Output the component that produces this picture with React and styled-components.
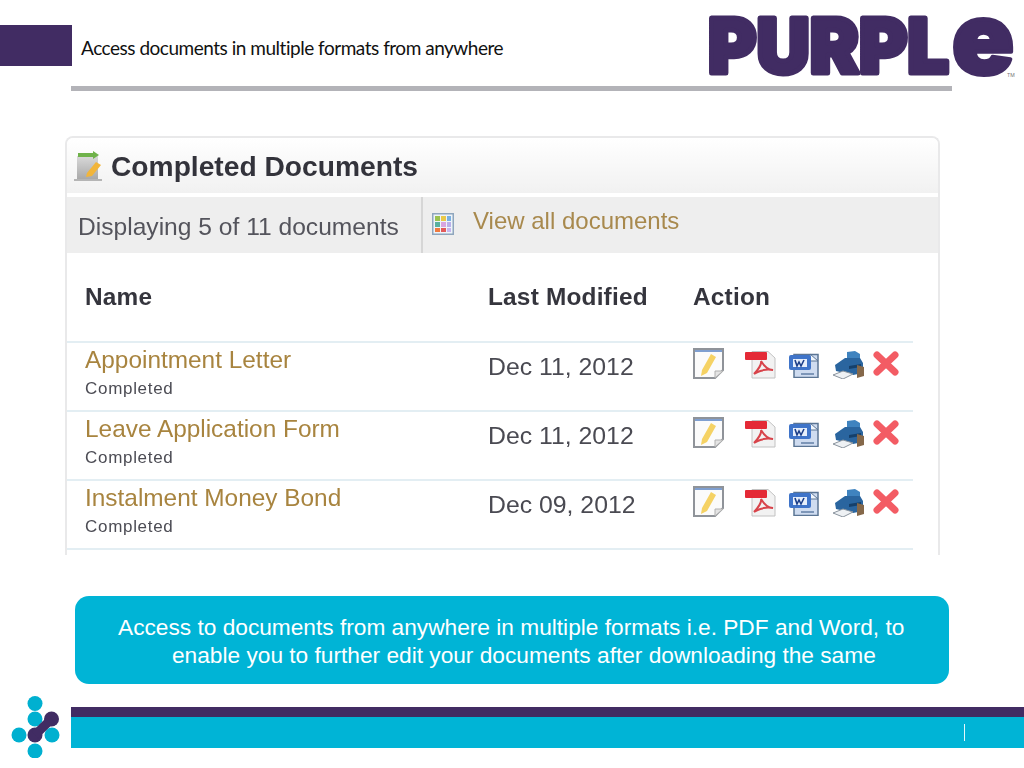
import React from 'react';
import styled, { createGlobalStyle } from 'styled-components';

const GlobalStyle = createGlobalStyle`
  html, body {
    margin: 0;
    padding: 0;
    background: #fff;
  }
`;

const Page = styled.div`
  width: 1024px;
  height: 768px;
  overflow: hidden;
  background: #fff;
  font-family: "Liberation Sans", Arial, sans-serif;
`;

const Header = styled.header`
  display: flex;
  align-items: flex-start;
  height: 86px;
`;

const TitleBlock = styled.div`
  width: 72px;
  height: 41px;
  margin-top: 25px;
  background: #412c63;
`;

const SlideTitle = styled.h1`
  margin: 36px 0 0 9px;
  font-family: Lato, sans-serif;
  font-weight: 400;
  font-size: 19px;
  line-height: 24px;
  letter-spacing: -0.48px;
  color: #111;
`;

const LogoWrap = styled.svg`
  display: block;
  flex: 0 0 318px;
  margin-left: auto;
  overflow: visible;
`;

const Rule = styled.div`
  width: 881px;
  height: 5px;
  margin-left: 71px;
  background: #b3b3b8;
`;

const Panel = styled.section`
  box-sizing: border-box;
  width: 875px;
  height: 419px;
  margin: 45px 0 0 65px;
  overflow: hidden;
  border: 2px solid #e9e9ea;
  border-bottom: none;
  border-radius: 8px 8px 0 0;
  filter: blur(0.45px);
`;

const PanelHead = styled.div`
  display: flex;
  align-items: center;
  gap: 7px;
  box-sizing: border-box;
  height: 59px;
  padding: 1px 0 0 7px;
  background: linear-gradient(#ffffff, #f1f1f1);
  background-size: 100% 55px;
  background-repeat: no-repeat;
  border-bottom: 4px solid #fff;
`;

const PanelTitle = styled.h2`
  margin: 0;
  font-size: 28.2px;
  font-weight: 700;
  color: #33333b;
`;

const Toolbar = styled.div`
  display: flex;
  height: 56px;
  background: #eeeeee;
`;

const Count = styled.div`
  box-sizing: border-box;
  width: 356px;
  padding: 16px 0 0 11px;
  border-right: 2px solid #d6d6d6;
  font-size: 24.6px;
  color: #54545c;
`;

const ViewAll = styled.div`
  display: flex;
  align-items: flex-start;
  gap: 19px;
  padding: 10px 0 0 9px;
  font-size: 24px;
  color: #a8894d;
`;

const Table = styled.div`
  width: 846px;
`;

const Row = styled.div`
  display: grid;
  grid-template-columns: 403px 205px 1fr;
  box-sizing: border-box;
  height: ${p => (p.$head ? '90px' : '69px')};
  padding-left: 18px;
  border-bottom: 2px solid #e3eef3;
`;

const HeadCell = styled.div`
  padding-top: 30px;
  font-size: 24.4px;
  font-weight: 700;
  letter-spacing: 0.2px;
  color: #35353d;
`;

const NameCell = styled.div`
  padding-top: 3px;
`;

const DocName = styled.div`
  font-size: 24.4px;
  line-height: 28px;
  color: #a8843f;
`;

const DocStatus = styled.div`
  margin-top: 5px;
  font-size: 17px;
  line-height: 20px;
  letter-spacing: 0.7px;
  color: #4c4c54;
`;

const DateCell = styled.div`
  padding-top: 9px;
  font-size: 24.8px;
  line-height: 30px;
  color: #4a4a52;
`;

const Actions = styled.div`
  display: flex;
  align-items: flex-start;
  padding-top: 5px;
  filter: blur(0.3px);
`;

const Icon = styled.svg`
  display: block;
  flex: none;
  margin: ${p => p.$mt || 0}px ${p => p.$mr || 0}px 0 0;
`;

const Callout = styled.div`
  box-sizing: border-box;
  width: 874px;
  height: 88px;
  margin: 41px 0 0 75px;
  padding: 17px 0 0 97px;
  border-radius: 14px;
  background: #00b4d6;
  color: #fff;
  font-size: 22.7px;
  line-height: 28px;
  text-indent: -54px;
  white-space: nowrap;
`;

const Footer = styled.footer`
  display: flex;
  align-items: center;
  height: 62px;
  margin-top: 12px;
`;

const MarkSlot = styled.div`
  flex: 0 0 71px;
`;

const Bars = styled.div`
  flex: 1;
  display: flex;
  flex-direction: column;
`;

const PurpleBar = styled.div`
  height: 10px;
  background: #412c63;
`;

const CyanBar = styled.div`
  display: flex;
  align-items: center;
  height: 31px;
  padding-left: 893px;
  background: #00b4d6;
`;

const Tick = styled.span`
  width: 1px;
  height: 17px;
  background: #e4f7fb;
`;

const PurpleLogo = () => (
  <LogoWrap width="318" height="86" viewBox="0 0 318 86">
    <g fontFamily="Inter, sans-serif" fontWeight="900" fill="#412c63" stroke="#412c63" strokeLinejoin="round">
      <text x="2" y="73" fontSize="76" strokeWidth="5" textLength="241" lengthAdjust="spacingAndGlyphs">
        PURPL
      </text>
      <text x="246" y="73.5" fontSize="100" strokeWidth="4" textLength="62" lengthAdjust="spacingAndGlyphs">
        e
      </text>
    </g>
    <text x="301" y="77" fontFamily="Inter, sans-serif" fontSize="5" fill="#777">TM</text>
  </LogoWrap>
);

const Mark = () => (
  <Icon width="71" height="62" viewBox="0 0 71 62">
    <g fill="#00b0d0">
      <circle cx="35" cy="7.5" r="7.5" />
      <circle cx="35" cy="23" r="7.5" />
      <circle cx="19" cy="39" r="7.5" />
      <circle cx="52" cy="39" r="7.5" />
      <circle cx="35" cy="55" r="7.5" />
    </g>
    <g fill="#412c63">
      <circle cx="51.5" cy="23" r="7.5" />
      <circle cx="35" cy="39" r="7.5" />
      <path d="M35 39 L51.5 23" stroke="#412c63" strokeWidth="9" />
    </g>
  </Icon>
);

const NotesIcon = () => (
  <Icon width="30" height="30" viewBox="0 0 30 30">
    <defs>
      <linearGradient id="noteBody" x1="0" y1="0" x2="0" y2="1">
        <stop offset="0" stopColor="#d9d9d9" />
        <stop offset="1" stopColor="#a9a9a9" />
      </linearGradient>
    </defs>
    <rect x="3" y="5" width="21" height="23" fill="url(#noteBody)" />
    <path d="M4 2 H19 V0 L25 4 L19 8 V6 H4 Z" fill="#6fb24a" />
    <path d="M13 22 L22 11 L27 14 L18 25 L12 26 Z" fill="#f2b53a" />
    <path d="M0 28 H28 V30 H0 Z" fill="#b5b5b5" />
  </Icon>
);

const GridIcon = () => (
  <Icon width="22" height="22" viewBox="0 0 22 22" $mt={6}>
    <rect x="0.75" y="0.75" width="20.5" height="20.5" fill="#eef4fa" stroke="#8fa6bd" strokeWidth="1.5" />
    <rect x="3" y="3" width="5" height="5" fill="#9bc24f" />
    <rect x="9" y="3" width="5" height="5" fill="#e9c94a" />
    <rect x="15" y="3" width="4" height="5" fill="#7ab0e0" />
    <rect x="3" y="9" width="5" height="5" fill="#59b0a0" />
    <rect x="9" y="9" width="5" height="5" fill="#d8a5e0" />
    <rect x="15" y="9" width="4" height="5" fill="#b9b0ea" />
    <rect x="3" y="15" width="5" height="4" fill="#ef7a3f" />
    <rect x="9" y="15" width="5" height="4" fill="#e35a5a" />
    <rect x="15" y="15" width="4" height="4" fill="#c6b5ee" />
  </Icon>
);

const EditIcon = () => (
  <Icon width="32" height="32" viewBox="0 0 32 32" $mr={20}>
    <path d="M1 1 H30 V22 L22 30 H1 Z" fill="#fbfbfb" stroke="#8f9399" strokeWidth="2" />
    <path d="M2 2 H29 V4 H2 Z" fill="#7f9fd0" />
    <path d="M9 22 L18 6 L23 9 L14 25 L8 28 Z" fill="#f5d264" />
    <path d="M22 30 V23 H30 Z" fill="#e4e4e4" stroke="#b0b0b0" />
  </Icon>
);

const PdfIcon = () => (
  <Icon width="31" height="31" viewBox="0 0 31 31" $mr={13} $mt={3}>
    <path d="M7 0.5 H23 L30 7 V27 H7 Z" fill="#f2f2f2" stroke="#c2c2c2" />
    <rect x="0" y="1" width="22" height="8" rx="1" fill="#e42a36" />
    <path
      d="M9 23 C13 19 17 13 16 10 C19 15 23 19 28 19 C22 18 15 19 9 23 Z"
      fill="none"
      stroke="#d8434a"
      strokeWidth="2"
    />
  </Icon>
);

const WordIcon = () => (
  <Icon width="30" height="25" viewBox="0 0 30 25" $mr={14} $mt={5}>
    <rect x="5" y="1.5" width="24" height="23" fill="#cfdcf0" stroke="#5b7594" strokeWidth="1.5" />
    <path d="M21 1 L29 8 H21 Z" fill="#f0f5fb" stroke="#5b7594" />
    <rect x="0" y="2" width="22" height="15" rx="2" fill="#3f74c9" />
    <rect x="4" y="6" width="14" height="8" fill="#e7effb" />
    <path d="M6 7 L8 13 L10 9 L12 13 L15 7" fill="none" stroke="#1c3f8a" strokeWidth="1.6" />
    <rect x="12" y="20" width="13" height="2" fill="#7d96b8" />
  </Icon>
);

const PrinterIcon = () => (
  <Icon width="31" height="28" viewBox="0 0 31 28" $mr={9} $mt={3}>
    <path d="M14 1 L22 0 L27 3 V11 H14 Z" fill="#3f83bf" />
    <path d="M2 14 L12 7 H27 L30 12 V22 L20 24 L3 20 Z" fill="#2a659f" />
    <path d="M16 15 L28 13 V16 L16 18 Z" fill="#16406b" />
    <path d="M24 14 L31 16 V25 L24 27 Z" fill="#85684a" />
    <path d="M0 24 L10 20 L20 23 L10 28 Z" fill="#eef1f4" stroke="#8a949e" />
  </Icon>
);

const DeleteIcon = () => (
  <Icon width="26" height="25" viewBox="0 0 26 25" $mt={3}>
    <path d="M4 4 L22 21 M22 4 L4 21" stroke="#f35c64" strokeWidth="7" strokeLinecap="round" />
  </Icon>
);

const docs = [
  { name: 'Appointment Letter', date: 'Dec 11, 2012' },
  { name: 'Leave Application Form', date: 'Dec 11, 2012' },
  { name: 'Instalment Money Bond', date: 'Dec 09, 2012' },
];

const App = () => (
  <Page>
    <GlobalStyle />
    <Header>
      <TitleBlock />
      <SlideTitle>Access documents in multiple formats from anywhere</SlideTitle>
      <PurpleLogo />
    </Header>
    <Rule />
    <Panel>
      <PanelHead>
        <NotesIcon />
        <PanelTitle>Completed Documents</PanelTitle>
      </PanelHead>
      <Toolbar>
        <Count>Displaying 5 of 11 documents</Count>
        <ViewAll>
          <GridIcon />
          View all documents
        </ViewAll>
      </Toolbar>
      <Table>
        <Row $head>
          <HeadCell>Name</HeadCell>
          <HeadCell>Last Modified</HeadCell>
          <HeadCell>Action</HeadCell>
        </Row>
        {docs.map(doc => (
          <Row key={doc.name}>
            <NameCell>
              <DocName>{doc.name}</DocName>
              <DocStatus>Completed</DocStatus>
            </NameCell>
            <DateCell>{doc.date}</DateCell>
            <Actions>
              <EditIcon />
              <PdfIcon />
              <WordIcon />
              <PrinterIcon />
              <DeleteIcon />
            </Actions>
          </Row>
        ))}
      </Table>
    </Panel>
    <Callout>
      Access to documents from anywhere in multiple formats i.e. PDF and Word, to
      <br />
      enable you to further edit your documents after downloading the same
    </Callout>
    <Footer>
      <MarkSlot>
        <Mark />
      </MarkSlot>
      <Bars>
        <PurpleBar />
        <CyanBar>
          <Tick />
        </CyanBar>
      </Bars>
    </Footer>
  </Page>
);

export default App;
